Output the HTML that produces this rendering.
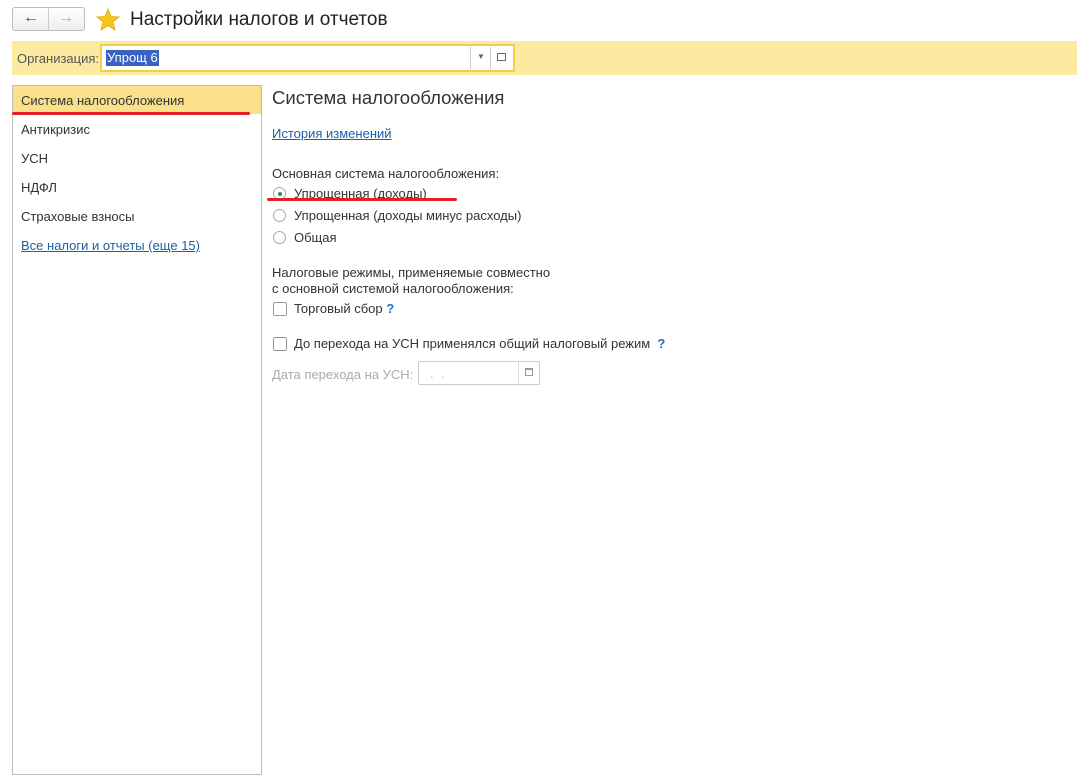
<!DOCTYPE html>
<html><head><meta charset="utf-8"><style>
body{margin:0;width:1077px;height:771px;background:#fff;font-family:"Liberation Sans",Arial,sans-serif;font-size:13px;color:#333;position:relative;overflow:hidden}
.a{position:absolute}
.lnk{color:#1c5fa8;text-decoration:underline}
.rad{width:13px;height:13px;border:1px solid #aaa;border-radius:50%;box-sizing:border-box;background:#fff}
.chk{width:14px;height:14px;border:1px solid #999;border-radius:2px;box-sizing:border-box;background:#fff}
.q{color:#1c74c0;font-weight:bold}
</style></head><body>
<div class="a" style="left:12px;top:7px;width:73px;height:24px;border:1px solid #bbb;border-radius:3px;box-sizing:border-box;background:linear-gradient(#fff,#eee)"></div>
<div class="a" style="left:48px;top:8px;width:1px;height:22px;background:#ccc"></div>
<div class="a" style="left:23px;top:9px;font-size:16px;color:#444">&#8592;</div>
<div class="a" style="left:58px;top:9px;font-size:16px;color:#aaa">&#8594;</div>
<svg class="a" style="left:96px;top:8px" width="24" height="23" viewBox="0 0 24 23"><polygon points="12,1 15,8.5 23,9 17,14 19,22 12,17.5 5,22 7,14 1,9 9,8.5" fill="#f5c518" stroke="#e0a800" stroke-width="0.8"/></svg>
<div class="a" style="left:130px;top:9px;font-size:19px;color:#222">Настройки налогов и отчетов</div>
<div class="a" style="left:12px;top:41px;width:1065px;height:34px;background:#fbeaa0"></div>
<div class="a" style="left:17px;top:51px;color:#555">Организация:</div>
<div class="a" style="left:100px;top:44px;width:415px;height:28px;border:2px solid #f2cf4a;box-sizing:border-box;background:#fff"></div>
<div class="a" style="left:106px;top:50px;background:#3a62c0;color:#fff;padding:0 1px;height:16px;line-height:16px">Упрощ 6</div>
<div class="a" style="left:470px;top:47px;width:1px;height:22px;background:#ccc"></div>
<div class="a" style="left:490px;top:47px;width:1px;height:22px;background:#ccc"></div>
<div class="a" style="left:477px;top:52px;font-size:8px;color:#666">&#9660;</div>
<div class="a" style="left:497px;top:53px;width:7px;height:6px;border:1px solid #666"></div>
<div class="a" style="left:12px;top:85px;width:250px;height:690px;border:1px solid #bbb;box-sizing:border-box"></div>
<div class="a" style="left:13px;top:86px;width:248px;height:28px;background:#fbe08a"></div>
<div class="a" style="left:12px;top:112px;width:238px;height:3px;background:#e3202a;border-radius:2px"></div>
<div class="a" style="left:21px;top:93px">Система налогообложения</div>
<div class="a" style="left:21px;top:122px">Антикризис</div>
<div class="a" style="left:21px;top:151px">УСН</div>
<div class="a" style="left:21px;top:180px">НДФЛ</div>
<div class="a" style="left:21px;top:209px">Страховые взносы</div>
<div class="a lnk" style="left:21px;top:238px">Все налоги и отчеты (еще 15)</div>
<div class="a" style="left:272px;top:87px;font-size:18.5px;color:#333">Система налогообложения</div>
<div class="a lnk" style="left:272px;top:126px">История изменений</div>
<div class="a" style="left:272px;top:166px">Основная система налогообложения:</div>
<div class="a rad" style="left:273px;top:187px"></div>
<div class="a" style="left:277.5px;top:191.5px;width:4px;height:4px;border-radius:50%;background:#1a9a4a"></div>
<div class="a" style="left:294px;top:186px">Упрощенная (доходы)</div>
<div class="a" style="left:267px;top:198px;width:190px;height:3px;background:#e3202a;border-radius:2px"></div>
<div class="a rad" style="left:273px;top:209px"></div>
<div class="a" style="left:294px;top:208px">Упрощенная (доходы минус расходы)</div>
<div class="a rad" style="left:273px;top:231px"></div>
<div class="a" style="left:294px;top:230px">Общая</div>
<div class="a" style="left:272px;top:265px">Налоговые режимы, применяемые совместно</div>
<div class="a" style="left:272px;top:281px">с основной системой налогообложения:</div>
<div class="a chk" style="left:273px;top:302px"></div>
<div class="a" style="left:294px;top:301px">Торговый сбор <span class="q">?</span></div>
<div class="a chk" style="left:273px;top:337px"></div>
<div class="a" style="left:294px;top:336px">До перехода на УСН применялся общий налоговый режим <span class="q">&nbsp;?</span></div>
<div class="a" style="left:272px;top:367px;color:#aaa">Дата перехода на УСН:</div>
<div class="a" style="left:418px;top:361px;width:122px;height:24px;border:1px solid #ccc;border-radius:2px;box-sizing:border-box"></div>
<div class="a" style="left:518px;top:362px;width:1px;height:22px;background:#ddd"></div>
<div class="a" style="left:430px;top:366px;color:#bbb">.&nbsp;&nbsp;.</div>
<div class="a" style="left:525px;top:368px;width:8px;height:8px;border:1px solid #999;box-sizing:border-box;border-top-width:2px"></div>
</body></html>
